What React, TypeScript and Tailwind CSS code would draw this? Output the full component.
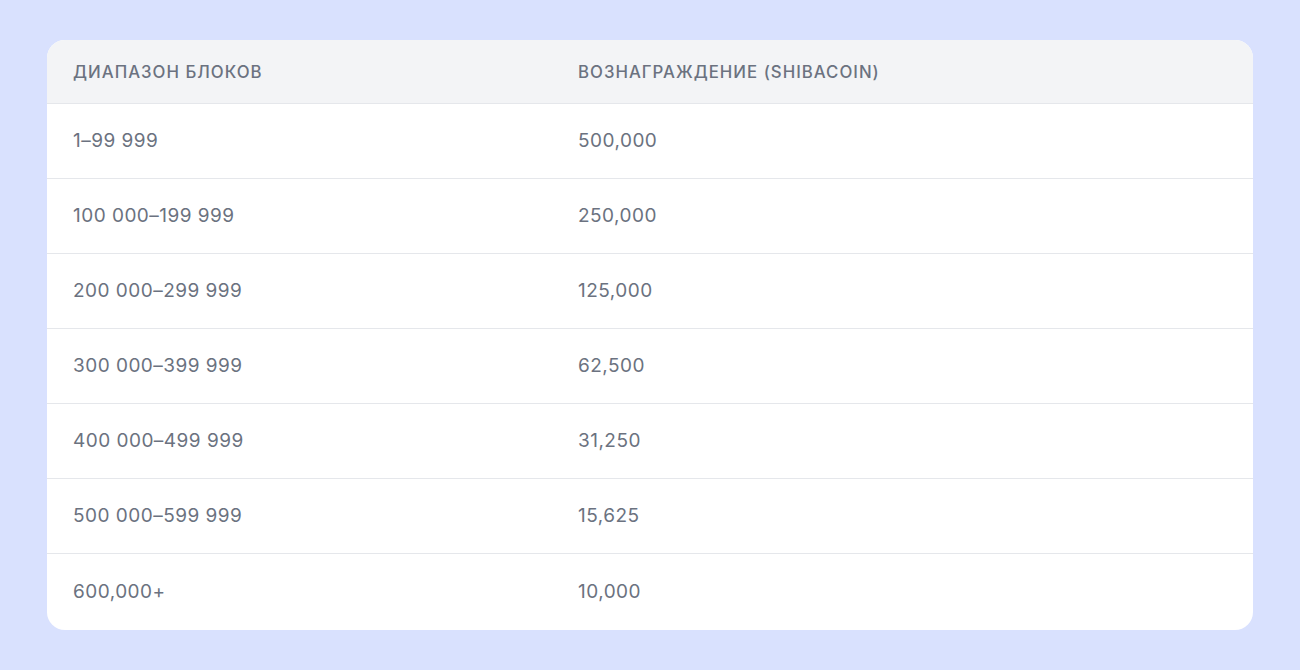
import React from 'react';

const rows = [
  { range: '1–99 999', reward: '500,000' },
  { range: '100 000–199 999', reward: '250,000' },
  { range: '200 000–299 999', reward: '125,000' },
  { range: '300 000–399 999', reward: '62,500' },
  { range: '400 000–499 999', reward: '31,250' },
  { range: '500 000–599 999', reward: '15,625' },
  { range: '600,000+', reward: '10,000' },
];

const App = () => {
  return (
    <div className="min-h-screen bg-[#d9e1fe] pt-[40px] px-[47px] font-['Inter',sans-serif]">
      <div className="bg-white rounded-[18px] overflow-hidden">
        {/* Header */}
        <div className="grid grid-cols-[531px_1fr] h-[64px] items-center bg-[#f3f4f6] border-b border-[#e5e7eb] px-[26px] pt-[3px] text-[16.8px] font-medium uppercase tracking-[0.06em] text-[#6b7280]">
          <div>Диапазон блоков</div>
          <div className="-ml-[26px]">Вознаграждение (Shibacoin)</div>
        </div>

        {/* Rows */}
        {rows.map((row, i) => (
          <div
            key={i}
            className={`grid grid-cols-[531px_1fr] items-center px-[26px] text-[19px] tracking-[0.025em] text-[#6b7280] ${
              i < rows.length - 1 ? 'h-[75px] border-b border-[#e5e7eb]' : 'h-[76px]'
            }`}
          >
            <div>{row.range}</div>
            <div className="-ml-[26px]">{row.reward}</div>
          </div>
        ))}
      </div>
    </div>
  );
};

export default App;
